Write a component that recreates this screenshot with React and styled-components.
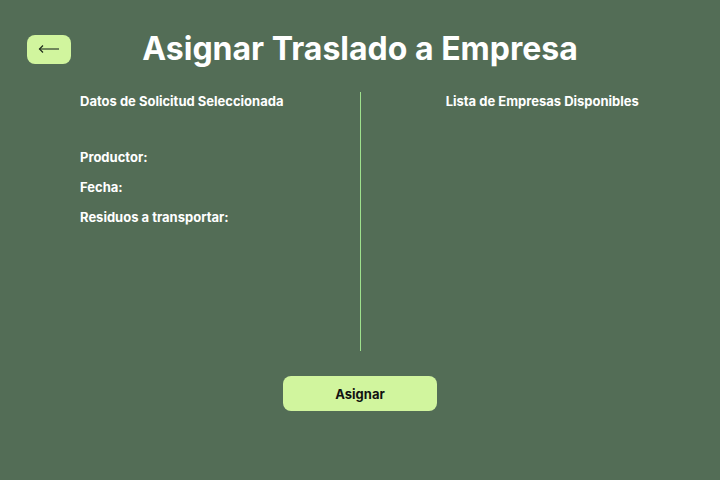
import React from 'react';
import styled, { createGlobalStyle } from 'styled-components';

const GlobalStyle = createGlobalStyle`
  html, body {
    margin: 0;
    padding: 0;
    background: #536d56;
    font-family: Inter, "Noto Sans", sans-serif;
    color: #ffffff;
  }
`;

const Page = styled.div`
  width: 720px;
  height: 480px;
  box-sizing: border-box;
  padding-top: 29px;
  display: flex;
  flex-direction: column;
  align-items: center;
`;

const Header = styled.header`
  width: 100%;
  box-sizing: border-box;
  padding: 0 27px;
  display: grid;
  grid-template-columns: 1fr auto 1fr;
  align-items: center;
  height: 40px;
`;

const BackButton = styled.button`
  justify-self: start;
  width: 44px;
  height: 29px;
  border: none;
  border-radius: 8px;
  background: #d1f59e;
  display: flex;
  align-items: center;
  justify-content: center;
  padding: 0;
  cursor: pointer;
`;

const Title = styled.h1`
  margin: 0;
  font-size: 32px;
  line-height: 40px;
  font-weight: 700;
`;

const Columns = styled.div`
  margin-top: 23px;
  width: 100%;
  display: grid;
  grid-template-columns: 1fr 1px 1fr;
  height: 259px;
`;

const Column = styled.section`
  display: flex;
  flex-direction: column;
  align-items: ${(p) => (p.$center ? 'center' : 'flex-start')};
  padding-left: ${(p) => (p.$center ? '4px' : '80px')};
  padding-top: 1px;
`;

const Divider = styled.div`
  background: #9ee08c;
`;

const Heading = styled.h2`
  margin: 0 0 40px;
  font-size: 13px;
  line-height: 16px;
  font-weight: 700;
`;

const Field = styled.p`
  margin: 0 0 14px;
  font-size: 13px;
  line-height: 16px;
  font-weight: 700;
`;

const AssignButton = styled.button`
  margin-top: 25px;
  width: 154px;
  height: 35px;
  border: none;
  border-radius: 8px;
  background: #d1f59e;
  color: #111;
  font-family: Inter, "Noto Sans", sans-serif;
  font-size: 13px;
  font-weight: 700;
  cursor: pointer;
`;

const ArrowIcon = () => (
  <svg width="22" height="10" viewBox="0 0 22 10">
    <path d="M1.5 5 H21" stroke="#3b4a36" strokeWidth="1.3" fill="none" />
    <path d="M5 1.5 L1.5 5 L5 8.5" stroke="#1f2a1c" strokeWidth="1.2" fill="none" />
  </svg>
);

export default function App() {
  return (
    <>
      <GlobalStyle />
      <Page>
        <Header>
          <BackButton aria-label="Volver">
            <ArrowIcon />
          </BackButton>
          <Title>Asignar Traslado a Empresa</Title>
          <span />
        </Header>
        <Columns>
          <Column>
            <Heading>Datos de Solicitud Seleccionada</Heading>
            <Field>Productor:</Field>
            <Field>Fecha:</Field>
            <Field>Residuos a transportar:</Field>
          </Column>
          <Divider />
          <Column $center>
            <Heading>Lista de Empresas Disponibles</Heading>
          </Column>
        </Columns>
        <AssignButton>Asignar</AssignButton>
      </Page>
    </>
  );
}
